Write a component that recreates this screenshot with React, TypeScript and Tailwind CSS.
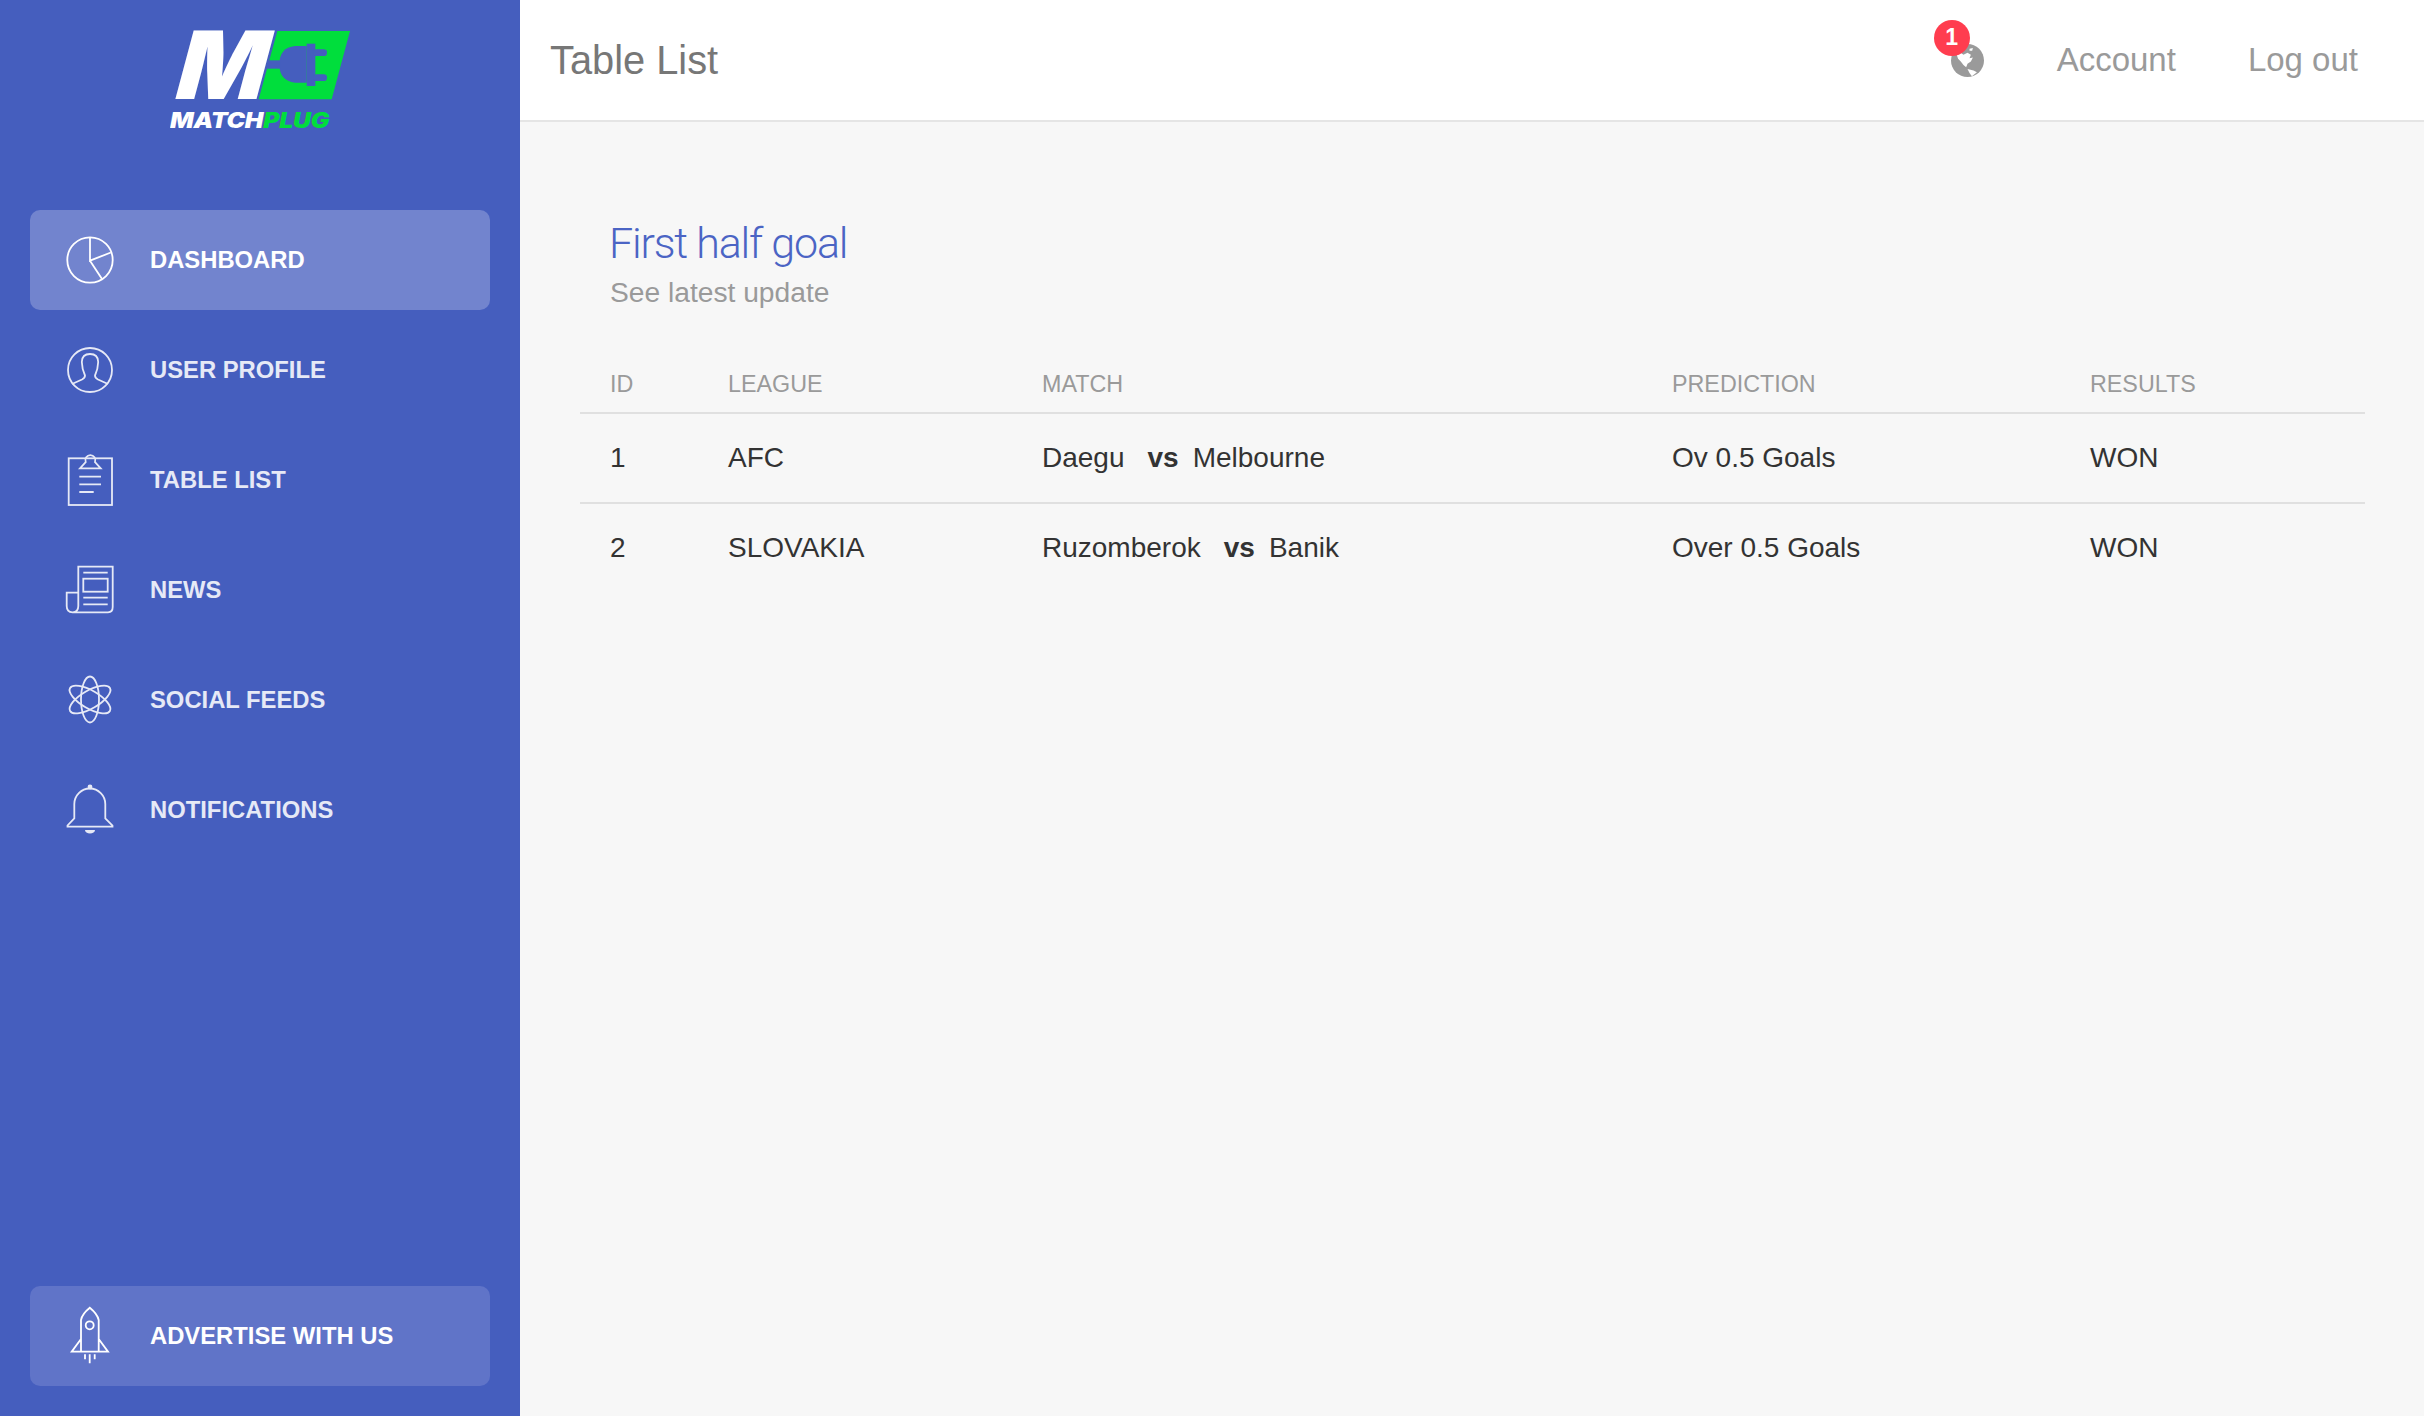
import type { ReactNode } from "react";

function Icon({ children }: { children: ReactNode }) {
  return (
    <svg
      viewBox="0 0 48 48"
      className="h-12 w-12 shrink-0 overflow-visible"
      fill="none"
      stroke="currentColor"
      strokeWidth="1.8"
    >
      {children}
    </svg>
  );
}

const icons = {
  dashboard: (
    <Icon>
      <circle cx="24" cy="24" r="22.7" />
      <path d="M24 1.3V24.7L44.8 16.5M24 24.7L36 43" />
    </Icon>
  ),
  user: (
    <Icon>
      <circle cx="24" cy="24" r="22" />
      <path d="M6 38L16 33.5Q19 32 19 29.5Q16 23 15.8 16Q16 8 24 8Q32 8 32.2 16Q32 23 29 29.5Q29 32 32 33.5L42 38" />
    </Icon>
  ),
  table: (
    <Icon>
      <rect x="2.7" y="2.3" width="43.3" height="46.7" />
      <path d="M14 12.3H34.7L29 6A5 5 0 1 0 19.7 6ZM13.3 20.7H35M13.3 28.3H35M13.3 36H27.7" />
    </Icon>
  ),
  news: (
    <Icon>
      <path d="M12.3 40V.7H46.7V41Q46.7 46.3 42 46.3H6.5Q.7 46.3 .7 40V26.7H12.3M12.3 40Q12.3 46.3 6.5 46.3" />
      <rect x="17.3" y="12.7" width="24.4" height="13" />
      <path d="M17.3 6.7H41.7M17.3 31.7H41.7M17.3 38.3H41.7" />
    </Icon>
  ),
  social: (
    <Icon>
      <ellipse cx="24" cy="23.5" rx="9" ry="23" />
      <ellipse cx="24" cy="23.5" rx="9" ry="23" transform="rotate(60 24 23.5)" />
      <ellipse cx="24" cy="23.5" rx="9" ry="23" transform="rotate(120 24 23.5)" />
    </Icon>
  ),
  bell: (
    <Icon>
      <path d="M1.5 40.7H46.5V39.5L39.3 32.3V18A15.5 15.5 0 0 0 8.3 18V32.3L1.5 39.5Z" />
      <circle cx="24" cy="1" r="2.4" fill="currentColor" stroke="none" />
      <path d="M19 44H29A5 3.6 0 0 1 19 44Z" fill="currentColor" stroke="none" />
    </Icon>
  ),
  rocket: (
    <Icon>
      <path d="M15 39.7V8Q16 2 23.8-4.3Q31.5 2 32.7 8V39.7M15 27L5.7 39.7H42L32.7 27" />
      <circle cx="23.7" cy="13.3" r="4" />
      <path d="M19 42.3V47.3M23.7 42.3V51.3M28.7 42.3V47.3" />
    </Icon>
  ),
};

const nav = [
  { label: "DASHBOARD", icon: icons.dashboard, active: true },
  { label: "USER PROFILE", icon: icons.user },
  { label: "TABLE LIST", icon: icons.table },
  { label: "NEWS", icon: icons.news },
  { label: "SOCIAL FEEDS", icon: icons.social },
  { label: "NOTIFICATIONS", icon: icons.bell },
];

const rows = [
  { id: 1, league: "AFC", home: "Daegu", away: "Melbourne", prediction: "Ov 0.5 Goals", result: "WON" },
  { id: 2, league: "SLOVAKIA", home: "Ruzomberok", away: "Banik", prediction: "Over 0.5 Goals", result: "WON" },
];

const cols = "grid grid-cols-[118px_314px_630px_418px_1fr] items-center px-[30px]";

function Globe() {
  return (
    <svg viewBox="63 86 98 98" className="h-[33px] w-[33px]">
      <circle cx="112" cy="135" r="49" fill="#9a9a9a" />
      <path
        d="M80 118L92 112L100 118L112 112L122 118L118 128L128 126L122 138L112 145L108 155L100 148L92 138L84 130Z"
        fill="#fff"
      />
      <path d="M112 160L130 165L140 170L125 182L118 172Z" fill="#fff" />
      <path d="M118 100L128 98L126 106L118 106Z" fill="#fff" />
    </svg>
  );
}

function Logo() {
  return (
    <div className="flex h-[210px] flex-col items-start pt-[23px] pl-[170px]">
      <div className="flex h-[84px] items-center pl-[10px]">
        <span className="w-[75px] -skew-x-[15deg] font-['Inter',sans-serif] text-[94px] leading-none font-black tracking-[-4px] text-white">
          M
        </span>
        <svg viewBox="765 78 300 228" className="h-[76px] w-[100px] shrink-0">
          <path d="M832 90H1050L995 295H776Z" fill="#00de3c" />
          <g fill="#455ebe">
            <path d="M920 135H885Q838 140 838 190Q838 240 885 245H920Z" />
            <rect x="920" y="128" width="26" height="127" />
            <rect x="940" y="145" width="41" height="20" rx="10" />
            <rect x="940" y="220" width="41" height="20" rx="10" />
            <rect x="800" y="178" width="42" height="25" />
          </g>
        </svg>
      </div>
      <div className="mt-[2px] flex origin-left scale-x-[1.18] font-['Inter',sans-serif] text-[21px] leading-[24px] font-black tracking-[-0.2px] italic">
        <span className="text-white">MATCH</span>
        <span className="text-[#00de3c]">PLUG</span>
      </div>
    </div>
  );
}

export default function App() {
  return (
    <div className="flex min-h-[1416px] w-full bg-[#f7f7f7] font-['Liberation_Sans',sans-serif]">
      <aside className="flex w-[520px] shrink-0 flex-col bg-[#455ebe] px-[30px] pb-[30px]">
        <div className="-mx-[30px]">
          <Logo />
        </div>
        <nav className="flex flex-col gap-[10px]">
          {nav.map((item) => (
            <a
              key={item.label}
              className={`flex h-[100px] items-center gap-[36px] rounded-[10px] pl-[36px] text-[23.8px] font-bold ${
                item.active ? "bg-[#7284ce] text-white" : "text-[#e6e9f6]"
              }`}
            >
              {item.icon}
              {item.label}
            </a>
          ))}
        </nav>
        <a className="mt-auto flex h-[100px] items-center gap-[36px] rounded-[10px] bg-[#6074c8] pl-[36px] text-[23.8px] font-bold text-white">
          {icons.rocket}
          ADVERTISE WITH US
        </a>
      </aside>

      <div className="flex min-w-0 flex-1 flex-col">
        <header className="flex h-[122px] items-center justify-between border-b-2 border-[#e5e5e5] bg-white pr-[66px] pl-[30px]">
          <h1 className="pt-[1px] text-[39.8px] font-normal text-[#777]">Table List</h1>
          <div className="flex items-center text-[33px] text-[#9a9a9a]">
            <div className="relative mr-[73px] h-[33px] w-[33px]">
              <Globe />
              <span className="absolute -top-[24px] -left-[17px] flex h-[36px] w-[36px] items-center justify-center rounded-full bg-[#ff3d4f] text-[23px] font-bold text-white">
                1
              </span>
            </div>
            <span>Account</span>
            <span className="ml-[72px]">Log out</span>
          </div>
        </header>

        <main className="flex-1 pt-[94px] pr-[59px] pl-[60px]">
          <div className="pl-[30px]">
            <h2 className="-ml-[1px] font-['Roboto',sans-serif] text-[43px] leading-[54px] font-light tracking-[-1.2px] text-[#4b64c4]">
              First half goal
            </h2>
            <p className="mt-[4px] text-[28.2px] leading-[36px] text-[#9a9a9a]">See latest update</p>
          </div>

          <div className={`${cols} mt-[44px] h-[60px] border-b-2 border-[#e0e0e0] pt-[2px] text-[23.3px] text-[#9a9a9a]`}>
            <span>ID</span>
            <span>LEAGUE</span>
            <span>MATCH</span>
            <span>PREDICTION</span>
            <span>RESULTS</span>
          </div>
          {rows.map((row, i) => (
            <div
              key={row.id}
              className={`${cols} h-[90px] border-b-2 text-[28px] text-[#333] ${
                i < rows.length - 1 ? "border-[#e0e0e0]" : "border-transparent"
              }`}
            >
              <span>{row.id}</span>
              <span>{row.league}</span>
              <span className="flex gap-[23px]">
                <span>{row.home}</span>
                <b>vs</b>
                <span className="-ml-[9px]">{row.away}</span>
              </span>
              <span>{row.prediction}</span>
              <span>{row.result}</span>
            </div>
          ))}
        </main>
      </div>
    </div>
  );
}
